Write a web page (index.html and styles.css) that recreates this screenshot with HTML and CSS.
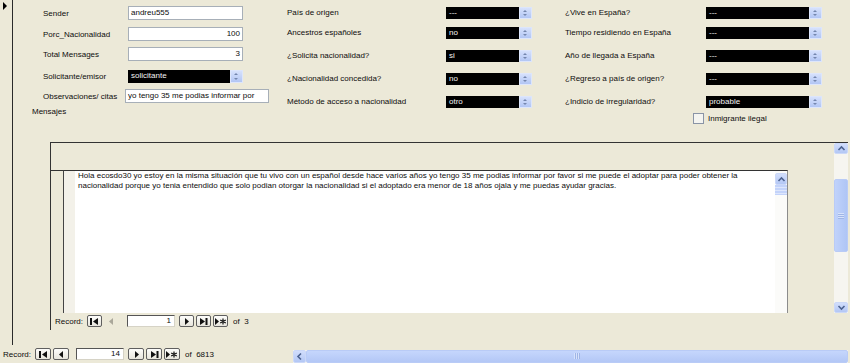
FILE: index.html
```html
<!DOCTYPE html>
<html lang="es">
<head>
    <meta charset="UTF-8">
    <title>Mensajes</title>
    <link rel="stylesheet" href="styles.css">
</head>
<body>

    <div class="form">
        <!-- record selector strip -->
        <div class="rowsel"><span class="cur"></span></div>

        <div class="detail">
            <div class="fields">
                <div class="col1">
                    <div class="field"><label>Sender</label><span class="tbox">andreu555</span></div>
                    <div class="field"><label>Porc_Nacionalidad</label><span class="tbox num">100</span></div>
                    <div class="field"><label>Total Mensages</label><span class="tbox num">3</span></div>
                    <div class="field"><label>Solicitante/emisor</label><span class="combo wide"><span>solicitante</span><i class="spin"></i></span></div>
                    <div class="field obs"><label>Observaciones/ citas</label><span class="tbox">yo tengo 35 me podias informar por</span></div>
                    <div class="caption">Mensajes</div>
                </div>

                <div class="col23">
                    <label>País de origen</label><span class="combo"><span>---</span><i class="spin"></i></span>
                    <span></span>
                    <label>¿Vive en España?</label><span class="combo"><span>---</span><i class="spin"></i></span>

                    <label>Ancestros españoles</label><span class="combo"><span>no</span><i class="spin"></i></span>
                    <span></span>
                    <label>Tiempo residiendo en España</label><span class="combo"><span>---</span><i class="spin"></i></span>

                    <label>¿Solicita nacionalidad?</label><span class="combo"><span>si</span><i class="spin"></i></span>
                    <span></span>
                    <label>Año de llegada a España</label><span class="combo"><span>---</span><i class="spin"></i></span>

                    <label>¿Nacionalidad concedida?</label><span class="combo"><span>no</span><i class="spin"></i></span>
                    <span></span>
                    <label>¿Regreso a país de origen?</label><span class="combo"><span>---</span><i class="spin"></i></span>

                    <label>Método de acceso a nacionalidad</label><span class="combo"><span>otro</span><i class="spin"></i></span>
                    <span></span>
                    <label>¿Indicio de irregularidad?</label><span class="combo"><span>probable</span><i class="spin"></i></span>

                    <div class="check"><span class="box"></span>Inmigrante ilegal</div>
                </div>
            </div>

            <!-- Mensajes subform -->
            <div class="subform">
                <div class="sf-main">
                    <div class="sf-body">
                        <div class="sf-head"></div>
                        <div class="sf-detail">
                            <div class="sf-sel"></div>
                            <div class="sf-gap"></div>
                            <div class="memo">
                                <div class="memo-text">Hola ecosdo30 yo estoy en la misma situación que tu vivo con un español desde hace varios años yo tengo 35 me podias informar por favor si me puede el adoptar para poder obtener la nacionalidad porque yo tenia entendido que solo podian otorgar la nacionalidad si el adoptado era menor de 18 años ojala y me puedas ayudar gracias.</div>
                                <div class="memo-scroll">
                                    <span class="sbtn"><svg width="9" height="7" viewBox="0 0 9 7"><path d="M1.5 5l3-3 3 3" /></svg></span>
                                    <span class="mthumb"></span>
                                </div>
                            </div>
                        </div>
                    </div>
                    <div class="vscroll">
                        <span class="sbtn"><svg width="9" height="7" viewBox="0 0 9 7"><path d="M1.5 5l3-3 3 3" /></svg></span>
                        <span class="vtrack"></span>
                        <span class="vthumb"><em></em></span>
                        <span class="vtrack grow"></span>
                        <span class="sbtn"><svg width="9" height="7" viewBox="0 0 9 7"><path d="M1.5 2l3 3 3-3" /></svg></span>
                    </div>
                </div>
                <div class="recnav sf-nav">
                    <span class="rlabel">Record:</span>
                    <span class="nbtn"><svg width="9" height="7" viewBox="0 0 9 7"><rect width="2" height="7"/><path d="M8 0v7L3 3.5z"/></svg></span>
                    <span class="nbtn off"><svg width="9" height="7" viewBox="0 0 9 7"><path d="M6 0v7L2 3.5z"/></svg></span>
                    <span class="rbox">1</span>
                    <span class="nbtn"><svg width="9" height="7" viewBox="0 0 9 7"><path d="M3 0v7l4-3.5z"/></svg></span>
                    <span class="nbtn"><svg width="9" height="7" viewBox="0 0 9 7"><path d="M1 0v7l5-3.5z"/><rect x="6.5" width="2" height="7"/></svg></span>
                    <span class="nbtn"><svg width="12" height="7" viewBox="0 0 12 7"><path d="M0 0v7l4-3.5z"/><path class="ast" d="M8 0.5v6M5.2 2l5.6 3M5.2 5l5.6-3"/></svg></span>
                    <span class="rof">of &nbsp;3</span>
                </div>
            </div>
        </div>
    </div>

    <!-- main record navigation -->
    <div class="recnav main-nav">
        <span class="rlabel">Record:</span>
        <span class="nbtn"><svg width="9" height="7" viewBox="0 0 9 7"><rect width="2" height="7"/><path d="M8 0v7L3 3.5z"/></svg></span>
        <span class="nbtn"><svg width="9" height="7" viewBox="0 0 9 7"><path d="M6 0v7L2 3.5z"/></svg></span>
        <span class="rbox">14</span>
        <span class="nbtn"><svg width="9" height="7" viewBox="0 0 9 7"><path d="M3 0v7l4-3.5z"/></svg></span>
        <span class="nbtn"><svg width="9" height="7" viewBox="0 0 9 7"><path d="M1 0v7l5-3.5z"/><rect x="6.5" width="2" height="7"/></svg></span>
        <span class="nbtn"><svg width="12" height="7" viewBox="0 0 12 7"><path d="M0 0v7l4-3.5z"/><path class="ast" d="M8 0.5v6M5.2 2l5.6 3M5.2 5l5.6-3"/></svg></span>
        <span class="rof">of &nbsp;6813</span>

        <div class="hscroll">
            <span class="sbtn"><svg width="7" height="9" viewBox="0 0 7 9"><path d="M5 1.5l-3 3 3 3" /></svg></span>
            <span class="hthumb"><em></em></span>
        </div>
    </div>

</body>
</html>
```

FILE: styles.css
```css
/* General */
body {
    margin: 0;
    width: 850px;
    height: 363px;
    overflow: hidden;
    background: #ece9d8;
    font-family: "Liberation Sans", Arial, sans-serif;
    font-size: 8px;
    color: #0c0c0c;
}

.form {
    display: flex;
    height: 345px;
}

/* Record selector strip */
.rowsel {
    width: 12px;
    border-right: 1px solid #2a2a2a;
}
.rowsel .cur {
    display: block;
    width: 0;
    margin: 2px 0 0 3px;
    border-left: 4px solid #000;
    border-top: 4px solid transparent;
    border-bottom: 4px solid transparent;
}

.detail {
    flex: 1;
    display: flex;
    flex-direction: column;
}

/* Top fields */
.fields {
    display: flex;
    height: 142px;
}
.col1 {
    width: 229px;
    margin-left: 30px;
    padding-top: 6px;
    display: grid;
    grid-template-rows: 21px 20px 22px 20px 14px auto;
}
.field {
    display: flex;
    align-items: center;
    height: 14px;
}
.field label {
    width: 85px;
}
.field.obs label {
    width: 82px;
}
.tbox {
    box-sizing: border-box;
    width: 115px;
    height: 14px;
    line-height: 12px;
    padding: 0 2px;
    background: #fff;
    border: 1px solid #a7afb8;
    white-space: nowrap;
    overflow: hidden;
}
.tbox.num {
    text-align: right;
}
.field.obs .tbox {
    width: 144px;
}
.caption {
    margin: 4px 0 0 -11px;
}

.col23 {
    margin-left: 15px;
    padding-top: 7px;
    display: grid;
    grid-template-columns: 159px 86px 33px 141px 116px;
    grid-template-rows: 20px 23px 23px 23px 17px 12px;
    align-items: start;
}
.col23 label {
    height: 12px;
    line-height: 12px;
    white-space: nowrap;
}

/* Combo box */
.combo {
    display: flex;
    height: 12px;
    background: #000;
    color: #f4f4f4;
}
.combo.wide {
    width: 115px;
    height: 13px;
}
.combo span {
    flex: 1;
    padding-left: 3px;
    line-height: 12px;
}
.spin {
    width: 11px;
    border: 1px solid #dde6fb;
    background: linear-gradient(#d6e1fc, #b2c6f4);
    position: relative;
}
.spin::before,
.spin::after {
    content: '';
    position: absolute;
    left: 3px;
    border-left: 2px solid transparent;
    border-right: 2px solid transparent;
}
.spin::before {
    top: 2px;
    border-bottom: 2px solid #7486ad;
}
.spin::after {
    bottom: 2px;
    border-top: 2px solid #7486ad;
}

.check {
    grid-column: 5;
    display: flex;
    align-items: center;
    margin-left: -13px;
    height: 11px;
}
.check .box {
    box-sizing: border-box;
    width: 11px;
    height: 11px;
    margin-right: 4px;
    border: 1px solid #8a94a6;
    background: #f4f4f0;
}

/* Subform */
.subform {
    width: 797px;
    height: 187px;
    margin-left: 37px;
    border-left: 1px solid #333;
    border-top: 1px solid #333;
    display: flex;
    flex-direction: column;
}
.sf-main {
    display: flex;
    height: 170px;
}
.sf-body {
    flex: 1;
    display: flex;
    flex-direction: column;
}
.sf-head {
    height: 27px;
}
.sf-detail {
    flex: 1;
    display: flex;
}
.sf-sel {
    width: 12px;
    border-top: 1px solid #333;
    border-right: 1px solid #444;
}
.sf-gap {
    width: 11px;
    border-top: 1px solid #333;
    background: #f3f1e9;
}
.memo {
    width: 712px;
    border-top: 1px solid #333;
    border-right: 1px solid #8c8c8c;
    background: #fff;
    display: flex;
}
.memo-text {
    flex: 1;
    padding: 0 4px 0 3px;
    line-height: 10px;
}
.memo-scroll {
    width: 12px;
    padding-top: 2px;
    display: flex;
    flex-direction: column;
    background: #fbfbf9;
}

/* Scrollbar parts */
.sbtn {
    display: flex;
    align-items: center;
    justify-content: center;
    box-sizing: border-box;
    height: 12px;
    border: 1px solid #cbd8f8;
    border-radius: 2px;
    background: linear-gradient(#d2defc, #b3c7f5);
}
.sbtn svg path {
    fill: none;
    stroke: #4d6391;
    stroke-width: 1.6;
}
.mthumb {
    height: 10px;
    background: repeating-linear-gradient(#c3d3fa 0 2px, #dde6fc 2px 3px);
}

.vscroll {
    width: 14px;
    display: flex;
    flex-direction: column;
    background: #f6f5f0;
}
.vscroll .sbtn {
    height: 11px;
}
.vtrack {
    height: 25px;
}
.vtrack.grow {
    flex: 1;
}
.vthumb {
    height: 73px;
    box-sizing: border-box;
    border: 1px solid #b9cbf6;
    border-radius: 2px;
    background: linear-gradient(90deg, #c0d2fb, #afc5f5);
    display: flex;
    align-items: center;
    justify-content: center;
}
.vthumb em,
.hthumb em {
    width: 6px;
    height: 6px;
    background: repeating-linear-gradient(#d7e2fb 0 1px, #9fb5e6 1px 2px);
}

/* Record navigation */
.recnav {
    display: flex;
    align-items: center;
}
.rlabel {
    margin-right: 4px;
}
.nbtn {
    display: flex;
    align-items: center;
    justify-content: center;
    box-sizing: border-box;
    width: 15px;
    height: 12px;
    margin-right: 2px;
    border: 1px solid #5f5f5f;
    border-radius: 2px;
    background: linear-gradient(#fdfdfb, #e7e5dc);
}
.nbtn svg {
    fill: #111;
}
.nbtn .ast {
    fill: none;
    stroke: #111;
    stroke-width: 1.2;
}
.nbtn.off {
    border-color: transparent;
    background: none;
}
.nbtn.off svg {
    fill: #aaa79a;
}
.rbox {
    box-sizing: border-box;
    width: 48px;
    height: 12px;
    margin: 0 4px 0 6px;
    padding-right: 3px;
    text-align: right;
    line-height: 10px;
    background: #fff;
    border-top: 1px solid #555;
    border-left: 1px solid #555;
    border-right: 1px solid #d6d3c6;
    border-bottom: 1px solid #d6d3c6;
}
.rof {
    margin-left: 3px;
}

.sf-nav {
    height: 16px;
    padding-left: 4px;
}

.main-nav {
    height: 18px;
    padding-left: 3px;
}
.main-nav .nbtn {
    width: 16px;
}
.main-nav .rbox {
    margin-left: 5px;
}

.hscroll {
    display: flex;
    width: 555px;
    height: 13px;
    margin: 4px 2px 0 auto;
    background: #f6f5f0;
}
.hscroll .sbtn {
    width: 13px;
    height: 13px;
}
.hthumb {
    flex: 1;
    box-sizing: border-box;
    border: 1px solid #b9cbf6;
    border-radius: 2px;
    background: linear-gradient(#c5d6fc, #b3c7f6);
    display: flex;
    align-items: center;
    justify-content: center;
}
.hthumb em {
    background: repeating-linear-gradient(90deg, #d7e2fb 0 1px, #9fb5e6 1px 2px);
}
```
